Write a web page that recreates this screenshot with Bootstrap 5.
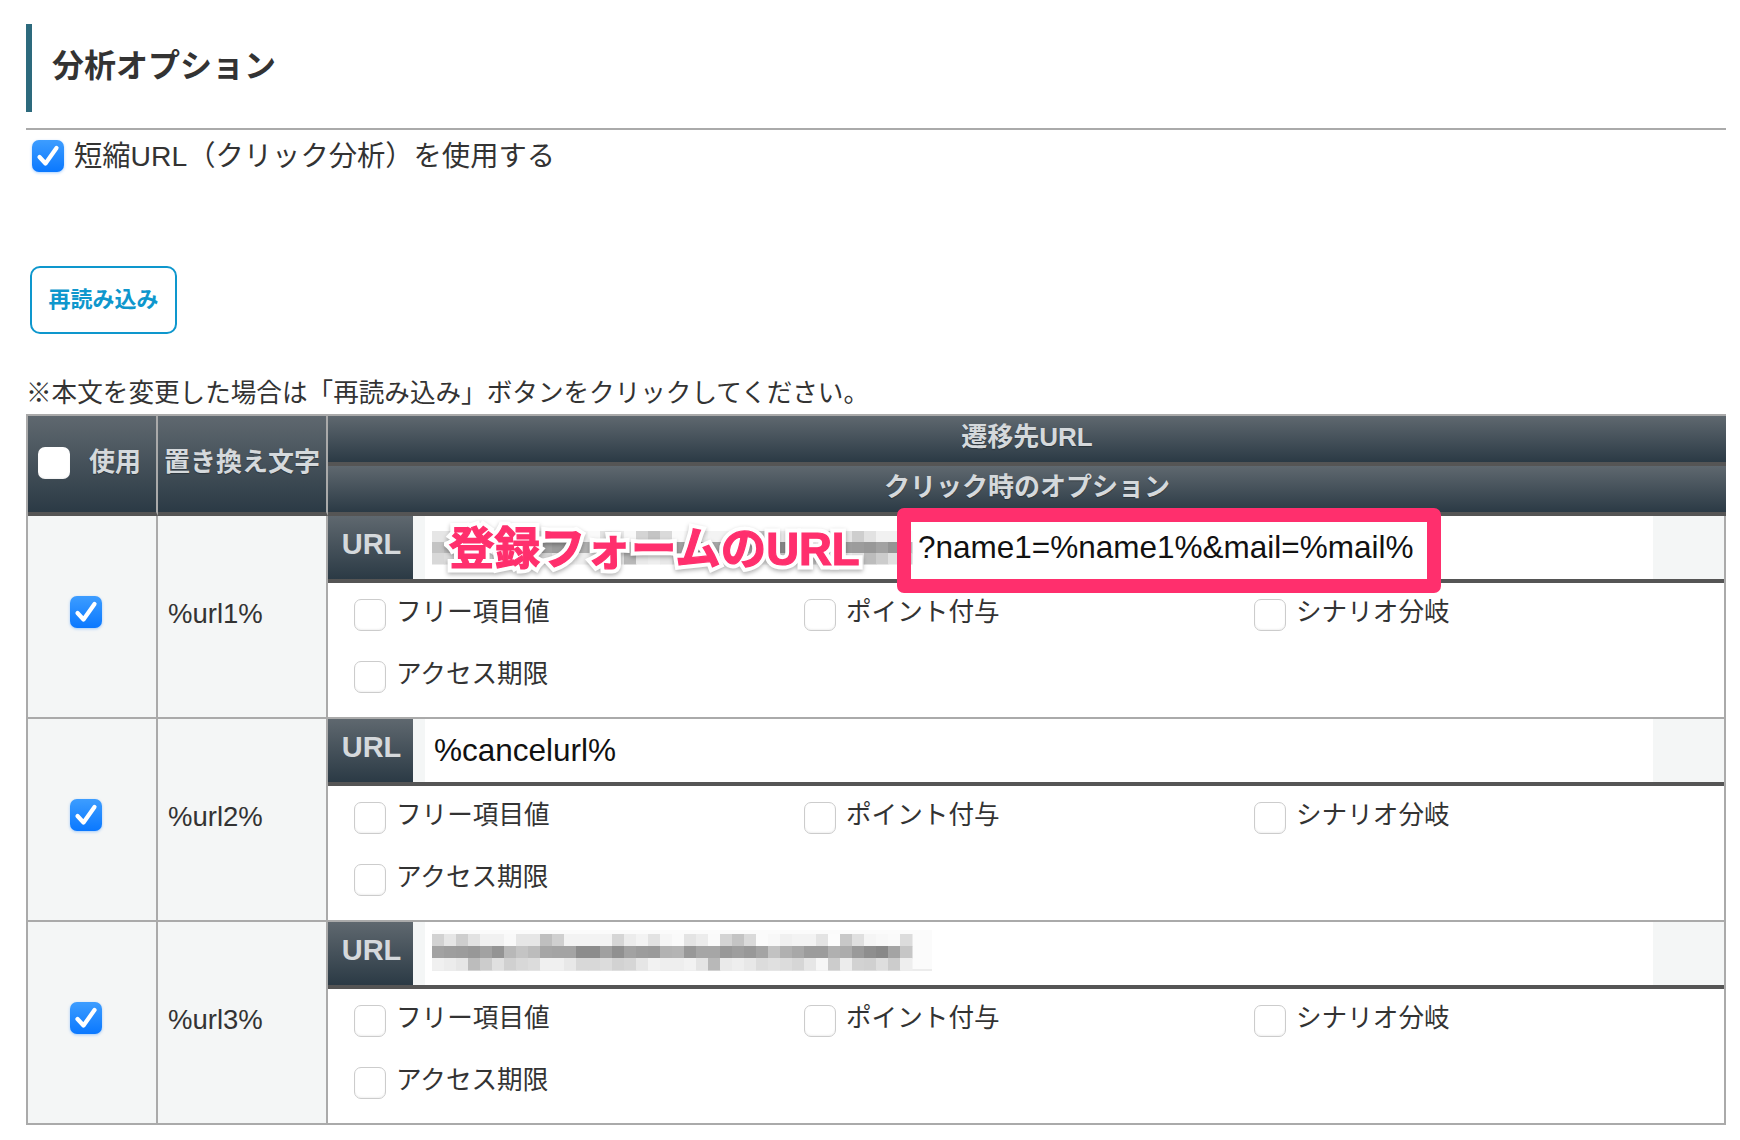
<!DOCTYPE html>
<html lang="ja">
<head>
  <meta charset="UTF-8">
  <meta name="viewport" content="width=device-width, initial-scale=1.0">
  <title>分析オプション</title>
  <link href="https://cdn.jsdelivr.net/npm/bootstrap@5.3.3/dist/css/bootstrap.min.css" rel="stylesheet">
  <style>
    body {
      font-family: "Liberation Sans", "Noto Sans CJK JP", sans-serif;
      color: #333;
      background: #fff;
    }
    .page-wrap {
      padding: 24px 14px 0 26px;
    }
    .opt-heading {
      height: 88px;
      margin: 0;
      padding: 0 0 4px 20px;
      border-left: 6px solid #2d6a7d;
      font-size: 32px;
      font-weight: 700;
      color: #333;
    }
    .opt-rule {
      margin: 16px 0 10px;
      border: 0;
      border-top: 2px solid #aaa;
      opacity: 1;
    }
    .use-label {
      margin-left: 6px;
      gap: 10px;
      font-size: 28.3px;
      line-height: 32px;
    }
    .opt-check.form-check-input {
      flex: none;
      width: 32px;
      height: 32px;
      margin: 0;
      border: 1px solid #ccc;
      border-radius: 7px;
      background-color: #fff;
      box-shadow: inset 0 -1px 2px rgba(0,0,0,0.06);
    }
    .opt-check.form-check-input:checked {
      border: 0;
      background-color: #0a78ff;
      background-image: url("data:image/svg+xml,%3Csvg xmlns='http://www.w3.org/2000/svg' viewBox='0 0 32 32'%3E%3Cpath d='M7.5 17l6 6.5L24.5 8' fill='none' stroke='%23fff' stroke-width='4.2' stroke-linecap='round' stroke-linejoin='round'/%3E%3C/svg%3E"), linear-gradient(#3d9dff, #0a78ff);
      background-size: 100% 100%;
      box-shadow: 0 1px 3px rgba(10,120,255,0.35);
    }
    .head-check.form-check-input {
      border: 0;
    }
    .reload-btn {
      display: block;
      width: 147px;
      height: 68px;
      margin: 94px 0 0 4px;
      padding: 0 0 2px;
      border: 2px solid #0e97cd;
      border-radius: 10px;
      background: #fff;
      color: #0e97cd;
      font-size: 22px;
      font-weight: 700;
    }
    .reload-note {
      margin: 41px 0 3px;
      font-size: 25.6px;
      line-height: 36px;
    }
    .opt-table {
      width: 1700px;
      table-layout: fixed;
      border-collapse: separate;
      border-spacing: 0;
      border-top: 2px solid #aaa;
      border-left: 2px solid #aaa;
    }
    .opt-table > thead > tr > th {
      padding: 0 0 3px;
      background: linear-gradient(#5f686f, #2b3a45);
      border-right: 2px solid #aaa;
      border-bottom: 4px solid #555;
      box-shadow: none;
      color: #d5d9dc;
      font-size: 26px;
      font-weight: 700;
      text-align: center;
      vertical-align: middle;
      text-shadow: 0 1px 1px rgba(0,0,0,0.3);
    }
    .opt-table > thead > tr > th.head-sub {
      height: 50px;
      border-right: 0;
    }
    .head-use {
      gap: 19px;
      padding-left: 10px;
    }
    .opt-table > tbody > tr > td {
      height: 203px;
      padding: 0;
      border-right: 2px solid #aaa;
      border-bottom: 2px solid #aaa;
      box-shadow: none;
      vertical-align: middle;
      color: #333;
    }
    .opt-table > tbody > tr > td.cell-side {
      background: #f4f6f6;
      font-size: 27.5px;
    }
    .opt-table > tbody > tr > td.cell-use {
      padding-right: 12px;
    }
    .opt-table > tbody > tr > td.cell-var {
      padding: 0 0 6px 10px;
    }
    .opt-table > tbody > tr > td.cell-main {
      vertical-align: top;
    }
    .url-row {
      position: relative;
      height: 67px;
      border-bottom: 4px solid #555;
    }
    .url-tag {
      width: 85px;
      padding: 0 0 5px 2px;
      background: linear-gradient(#5f686f, #2b3a45);
      color: #d5d9dc;
      font-size: 29px;
      font-weight: 700;
    }
    .url-strip-left {
      width: 12px;
      background: #f4f6f6;
    }
    .url-strip-right {
      width: 71px;
      background: #f4f6f6;
    }
    .url-value {
      min-width: 0;
      padding-left: 7px;
      color: #111;
      font-size: 31.5px;
      white-space: nowrap;
    }
    .url-plain {
      margin-left: 2px;
    }
    .blur-one {
      flex: none;
      width: 485px;
      height: 34px;
      margin-right: 1px;
    }
    .blur-two {
      flex: none;
      width: 500px;
      height: 41px;
      margin-top: -6px;
    }
    .url-frame {
      position: absolute;
      left: 569px;
      top: -8px;
      width: 544px;
      height: 85px;
      border: 14px solid #ff2f6d;
      border-radius: 7px;
    }
    .url-callout {
      position: absolute;
      left: 121px;
      top: 6px;
      color: #ff2f6d;
      font-size: 45.5px;
      font-weight: 700;
      line-height: 56px;
      white-space: nowrap;
      -webkit-text-stroke: 1.2px #ff2f6d;
      filter: drop-shadow(0 2px 2px rgba(0,0,0,0.3));
    }
    .url-callout::before {
      content: attr(data-text);
      position: absolute;
      left: 0;
      top: 0;
      z-index: -1;
      -webkit-text-stroke: 9px #fff;
    }
    .click-opts {
      display: grid;
      grid-template-columns: repeat(3, 450px);
      row-gap: 30px;
      padding: 16px 0 0 26px;
    }
    .click-opt {
      gap: 10px;
      font-size: 25.6px;
      line-height: 26px;
    }
  </style>
</head>
<body>

<div class="page-wrap">
  <h2 class="opt-heading d-flex align-items-center">分析オプション</h2>
  <hr class="opt-rule">
  <label class="use-label d-flex align-items-center">
    <input class="form-check-input opt-check" type="checkbox" checked>
    <span>短縮URL（クリック分析）を使用する</span>
  </label>

  <button type="button" class="btn reload-btn">再読み込み</button>
  <p class="reload-note">※本文を変更した場合は「再読み込み」ボタンをクリックしてください。</p>

  <table class="table mb-0 opt-table">
    <colgroup>
      <col style="width:130px">
      <col style="width:170px">
      <col style="width:1398px">
    </colgroup>
    <thead>
      <tr>
        <th rowspan="2">
          <div class="head-use d-flex align-items-center">
            <input class="form-check-input opt-check head-check" type="checkbox">
            <span>使用</span>
          </div>
        </th>
        <th rowspan="2">置き換え文字</th>
        <th class="head-sub">遷移先URL</th>
      </tr>
      <tr>
        <th class="head-sub">クリック時のオプション</th>
      </tr>
    </thead>
    <tbody>
      <tr>
        <td class="cell-side cell-use text-center"><input class="form-check-input opt-check" type="checkbox" checked></td>
        <td class="cell-side cell-var">%url1%</td>
        <td class="cell-main">
          <div class="url-row d-flex">
            <div class="url-tag d-flex align-items-center justify-content-center">URL</div>
            <div class="url-strip-left"></div>
            <div class="url-value flex-grow-1 d-flex align-items-center">
              <svg class="blur-one" data-shift="7" data-rows="11" viewBox="0 0 485 34"></svg>
              <span>?name1=%name1%&amp;mail=%mail%</span>
            </div>
            <div class="url-strip-right"></div>
            <div class="url-callout" data-text="登録フォームのURL">登録フォームのURL</div>
            <div class="url-frame"></div>
          </div>
          <div class="click-opts">
            <label class="click-opt d-flex"><input class="form-check-input opt-check" type="checkbox"><span>フリー項目値</span></label>
            <label class="click-opt d-flex"><input class="form-check-input opt-check" type="checkbox"><span>ポイント付与</span></label>
            <label class="click-opt d-flex"><input class="form-check-input opt-check" type="checkbox"><span>シナリオ分岐</span></label>
            <label class="click-opt d-flex"><input class="form-check-input opt-check" type="checkbox"><span>アクセス期限</span></label>
          </div>
        </td>
      </tr>
      <tr>
        <td class="cell-side cell-use text-center"><input class="form-check-input opt-check" type="checkbox" checked></td>
        <td class="cell-side cell-var">%url2%</td>
        <td class="cell-main">
          <div class="url-row d-flex">
            <div class="url-tag d-flex align-items-center justify-content-center">URL</div>
            <div class="url-strip-left"></div>
            <div class="url-value flex-grow-1 d-flex align-items-center"><span class="url-plain">%cancelurl%</span></div>
            <div class="url-strip-right"></div>
          </div>
          <div class="click-opts">
            <label class="click-opt d-flex"><input class="form-check-input opt-check" type="checkbox"><span>フリー項目値</span></label>
            <label class="click-opt d-flex"><input class="form-check-input opt-check" type="checkbox"><span>ポイント付与</span></label>
            <label class="click-opt d-flex"><input class="form-check-input opt-check" type="checkbox"><span>シナリオ分岐</span></label>
            <label class="click-opt d-flex"><input class="form-check-input opt-check" type="checkbox"><span>アクセス期限</span></label>
          </div>
        </td>
      </tr>
      <tr>
        <td class="cell-side cell-use text-center"><input class="form-check-input opt-check" type="checkbox" checked></td>
        <td class="cell-side cell-var">%url3%</td>
        <td class="cell-main">
          <div class="url-row d-flex">
            <div class="url-tag d-flex align-items-center justify-content-center">URL</div>
            <div class="url-strip-left"></div>
            <div class="url-value flex-grow-1 d-flex align-items-center">
              <svg class="blur-two" data-shift="0" data-rows="12" viewBox="0 0 500 41"></svg>
            </div>
            <div class="url-strip-right"></div>
          </div>
          <div class="click-opts">
            <label class="click-opt d-flex"><input class="form-check-input opt-check" type="checkbox"><span>フリー項目値</span></label>
            <label class="click-opt d-flex"><input class="form-check-input opt-check" type="checkbox"><span>ポイント付与</span></label>
            <label class="click-opt d-flex"><input class="form-check-input opt-check" type="checkbox"><span>シナリオ分岐</span></label>
            <label class="click-opt d-flex"><input class="form-check-input opt-check" type="checkbox"><span>アクセス期限</span></label>
          </div>
        </td>
      </tr>
    </tbody>
  </table>
</div>

<script>
// pixelated (hidden) urls
const blurRows = [
  'd2 e6 ce e2 f1 f1 f9 e6 e6 bf d0 f3 f3 f3 f3 d6 ec f3 e3 f6 fa e4 ec fa d4 c4 da fb f8 f0 f3 f3 e4 fc c8 e0 f5 f8 fa dc',
  'a2 9e 9c 98 a2 94 b8 c4 bc a6 a4 a4 8c 8c a0 90 a2 9c 9a b2 b4 98 a6 a6 98 9e 98 a4 c2 b0 a8 9c 9c b0 ac 9a 8e 88 a4 c6',
  'f0 ec e6 bc cc e0 d0 d8 dc f0 f0 e8 d8 d8 dc d2 d6 e6 f2 ee ee f2 e4 b8 ea ee e8 dc e0 dc d6 e6 f6 cc ec d2 d0 de cc ee'
].map(r => r.split(' '));

document.querySelectorAll('svg[data-rows]').forEach(svg => {
  const shift = +svg.dataset.shift;
  const rowH = +svg.dataset.rows;
  const top = shift ? 0 : 4;
  // the third url has a faint halo round its blocks
  let out = shift ? '' : '<rect width="500" height="39" fill="#fbfbfb"/><rect y="39" width="500" height="2" fill="#ececec"/>';
  blurRows.forEach((row, y) => {
    row.forEach((_, x) => {
      const v = row[(x + shift) % row.length];
      out += `<rect x="${x * 12}" y="${top + y * rowH}" width="12.5" height="${rowH + 0.5}" fill="#${v}${v}${v}"/>`;
    });
  });
  svg.innerHTML = out;
});
</script>
<script src="https://cdn.jsdelivr.net/npm/bootstrap@5.3.3/dist/js/bootstrap.bundle.min.js"></script>
</body>
</html>
